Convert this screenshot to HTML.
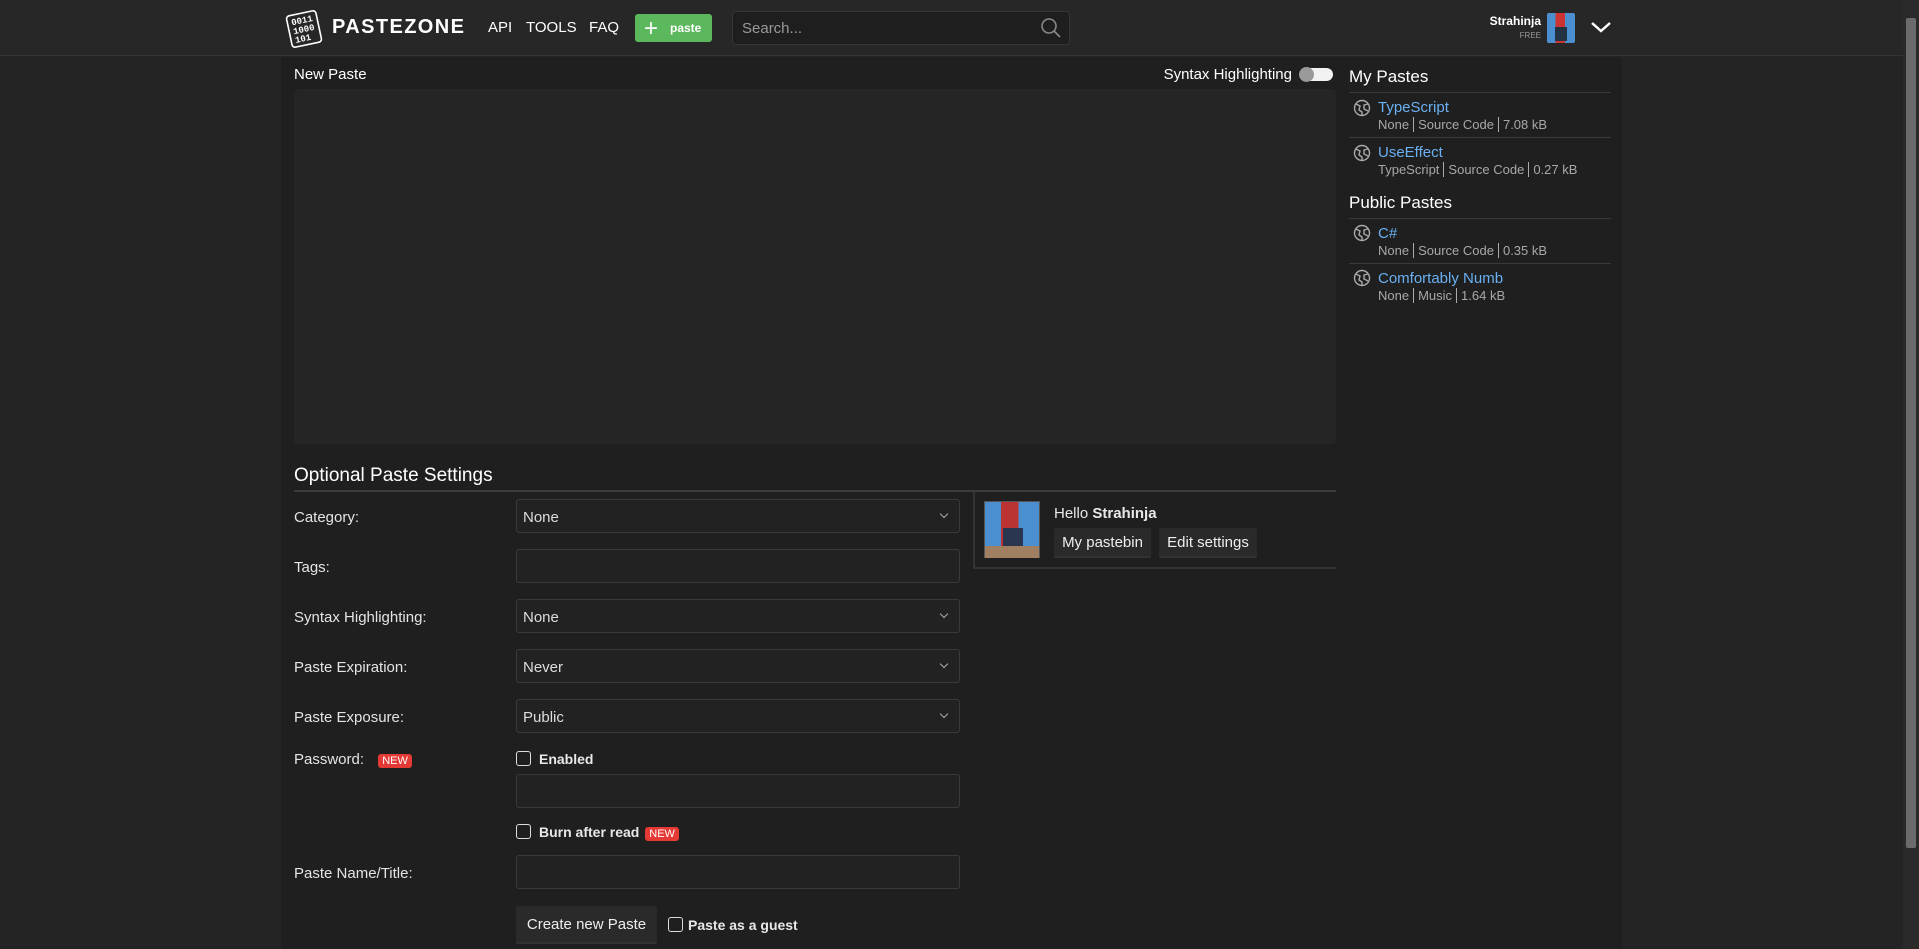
<!DOCTYPE html>
<html><head><meta charset="utf-8"><style>
*{box-sizing:border-box;margin:0;padding:0}
body{width:1919px;height:949px;overflow:hidden;background:#242424;font-family:"Liberation Sans",sans-serif;color:#e8e8e8;position:relative}
.abs{position:absolute}
.hdr{left:0;top:0;width:1903px;height:56px;background:#272727;border-bottom:1px solid #353535}
.col{left:281px;top:57px;width:1341px;height:892px;background:#1f1f1f}
.sb{left:1903px;top:0;width:16px;height:949px;background:#2a2a2a}
.sbt{left:1906px;top:18px;width:10px;height:830px;background:#6b6b6b;border-radius:2px}
.nav{font-size:15px;color:#fff;top:19px}
.inp{left:516px;width:444px;height:34px;background:#222;border:1px solid #3a3a3a;border-radius:3px;font-size:15px;padding:9px 6px;color:#ddd}
.sel::after{content:"";position:absolute;right:12px;top:11px;width:5px;height:5px;border-right:1px solid #aaa;border-bottom:1px solid #aaa;transform:rotate(45deg)}
.lbl{left:294px;font-size:15px;color:#e4e4e4}
.cb{width:15px;height:15px;border:1.5px solid #ddd;border-radius:3px}
.new{background:#e53935;color:#fff;font-size:11px;padding:1px 4px;border-radius:3px}
.btn{background:#2a2a2a;color:#eee;font-size:15px;border-radius:2px;border-bottom:2px solid #333;text-align:center}
.h2{font-size:17px;color:#fff}
.t{font-size:15px;color:#6ab0f3;left:1378px}
.m{font-size:13px;color:#a8a8a8;left:1378px}
.m b{font-weight:normal;border-left:1px solid #aaa;margin:0 4px}
.line{left:1349px;width:262px;height:1px;background:#3a3a3a}
.ic{left:1353px}
</style></head><body>
<div class="abs hdr"></div>
<svg class="abs" style="left:284px;top:9px" width="42" height="40" viewBox="0 0 42 40"><g transform="rotate(-12 20 20)"><rect x="5" y="4" width="30" height="32" rx="3" fill="none" stroke="#fff" stroke-width="1.6"/><text x="9" y="14" fill="#fff" font-size="9" font-weight="bold" font-family="Liberation Mono">0011</text><text x="9" y="23" fill="#fff" font-size="9" font-weight="bold" font-family="Liberation Mono">1000</text><text x="9" y="32" fill="#fff" font-size="9" font-weight="bold" font-family="Liberation Mono">101</text></g></svg>
<div class="abs" style="left:332px;top:16px;font-size:20px;font-weight:bold;letter-spacing:1.4px;color:#fff">PASTEZONE</div>
<div class="abs nav" style="left:488px">API</div>
<div class="abs nav" style="left:526px">TOOLS</div>
<div class="abs nav" style="left:589px">FAQ</div>
<div class="abs" style="left:635px;top:14px;width:77px;height:28px;background:#5cb85c;border-radius:3px;color:#fff;font-size:12px;font-weight:bold;padding:7px 0 0 35px">paste<span style="position:absolute;left:9px;top:1px;font-size:24px;font-weight:normal">+</span></div>
<div class="abs" style="left:732px;top:11px;width:338px;height:34px;background:#1e1e1e;border:1px solid #353535;border-radius:4px;font-size:15px;color:#999;padding:8px 9px">Search...</div>
<svg class="abs" style="left:1040px;top:17px" width="22" height="22" viewBox="0 0 22 22"><circle cx="9" cy="9" r="7" fill="none" stroke="#888" stroke-width="1.6"/><line x1="14" y1="14" x2="20" y2="20" stroke="#888" stroke-width="1.6"/></svg>
<div class="abs" style="left:1480px;top:14px;width:61px;text-align:right;font-size:12px;font-weight:bold;color:#fff">Strahinja</div>
<div class="abs" style="left:1480px;top:31px;width:61px;text-align:right;font-size:8px;color:#999">FREE</div>
<div class="abs" style="left:1547px;top:13px;width:28px;height:30px;background:linear-gradient(90deg,#4a8fd0 0 30%,#c33 30% 65%,#4a8fd0 65%);border-radius:2px"><div style="position:absolute;left:8px;top:14px;width:12px;height:14px;background:#234"></div></div>
<svg class="abs" style="left:1589px;top:19px" width="24" height="16" viewBox="0 0 24 16"><path d="M3 4 L12 12 L21 4" fill="none" stroke="#fff" stroke-width="2.5"/></svg>
<div class="abs col"></div>
<div class="abs sb"></div><div class="abs sbt"></div>
<div class="abs" style="left:294px;top:66px;font-size:15px;color:#fff">New Paste</div>
<div class="abs" style="left:1100px;top:66px;width:192px;text-align:right;font-size:15px;color:#fff">Syntax Highlighting</div>
<div class="abs" style="left:1300px;top:68px;width:33px;height:13px;background:#f2f2f2;border-radius:7px"><div style="position:absolute;left:-1px;top:-1px;width:15px;height:15px;border-radius:50%;background:#9a9a9a"></div></div>
<div class="abs" style="left:294px;top:89px;width:1042px;height:355px;background:#252525;border-radius:4px"></div>
<div class="abs" style="left:294px;top:465px;font-size:19px;color:#fff">Optional Paste Settings</div>
<div class="abs" style="left:294px;top:490px;width:1042px;height:2px;background:#3a3a3a"></div>
<div class="abs lbl" style="top:509px">Category:</div>
<div class="abs inp sel" style="top:499px">None</div>
<div class="abs lbl" style="top:559px">Tags:</div>
<div class="abs inp" style="top:549px"></div>
<div class="abs lbl" style="top:609px">Syntax Highlighting:</div>
<div class="abs inp sel" style="top:599px">None</div>
<div class="abs lbl" style="top:659px">Paste Expiration:</div>
<div class="abs inp sel" style="top:649px">Never</div>
<div class="abs lbl" style="top:709px">Paste Exposure:</div>
<div class="abs inp sel" style="top:699px">Public</div>
<div class="abs lbl" style="top:751px">Password: <span class="new" style="margin-left:10px">NEW</span></div>
<div class="abs cb" style="left:516px;top:751px"></div>
<div class="abs" style="left:539px;top:751px;font-size:14px;font-weight:bold">Enabled</div>
<div class="abs inp" style="top:774px"></div>
<div class="abs cb" style="left:516px;top:824px"></div>
<div class="abs" style="left:539px;top:824px;font-size:14px;font-weight:bold">Burn after read <span class="new" style="font-weight:normal;margin-left:2px">NEW</span></div>
<div class="abs lbl" style="top:865px">Paste Name/Title:</div>
<div class="abs inp" style="top:855px"></div>
<div class="abs btn" style="left:516px;top:906px;width:141px;height:38px;padding-top:10px">Create new Paste</div>
<div class="abs cb" style="left:668px;top:917px"></div>
<div class="abs" style="left:688px;top:917px;font-size:14px;font-weight:bold">Paste as a guest</div>
<div class="abs" style="left:973px;top:492px;width:363px;height:77px;border-left:2px solid #333;border-bottom:2px solid #333"></div>
<div class="abs" style="left:984px;top:501px;width:56px;height:57px;background:linear-gradient(90deg,#4a8fd0 0 30%,#b33 30% 62%,#4a8fd0 62%);border:1px solid #555"><div style="position:absolute;left:18px;top:26px;width:20px;height:22px;background:#2a3550"></div><div style="position:absolute;left:0;top:44px;width:54px;height:12px;background:#a08060"></div></div>
<div class="abs" style="left:1054px;top:505px;font-size:15px">Hello <b>Strahinja</b></div>
<div class="abs btn" style="left:1054px;top:528px;width:97px;height:30px;padding-top:6px">My pastebin</div>
<div class="abs btn" style="left:1159px;top:528px;width:98px;height:30px;padding-top:6px">Edit settings</div>
<div class="abs h2" style="left:1349px;top:67px">My Pastes</div>
<div class="abs line" style="top:92px"></div>
<svg class="abs ic" style="top:99px" width="18" height="18" viewBox="0 0 18 18"><g fill="none" stroke="#aaa" stroke-width="1.4"><circle cx="9" cy="9" r="7.5"/><path d="M3 5 L7 7 L6 11 L9 13 L9 16.5 M15 5 L11 6 L11 10 L15 12"/></g></svg>
<div class="abs t" style="top:99px">TypeScript</div><div class="abs m" style="top:117px">None<b></b>Source Code<b></b>7.08 kB</div>
<div class="abs line" style="top:137px"></div>
<svg class="abs ic" style="top:144px" width="18" height="18" viewBox="0 0 18 18"><g fill="none" stroke="#aaa" stroke-width="1.4"><circle cx="9" cy="9" r="7.5"/><path d="M3 5 L7 7 L6 11 L9 13 L9 16.5 M15 5 L11 6 L11 10 L15 12"/></g></svg>
<div class="abs t" style="top:144px">UseEffect</div><div class="abs m" style="top:162px">TypeScript<b></b>Source Code<b></b>0.27 kB</div>
<div class="abs h2" style="left:1349px;top:193px">Public Pastes</div>
<div class="abs line" style="top:218px"></div>
<svg class="abs ic" style="top:224px" width="18" height="18" viewBox="0 0 18 18"><g fill="none" stroke="#aaa" stroke-width="1.4"><circle cx="9" cy="9" r="7.5"/><path d="M3 5 L7 7 L6 11 L9 13 L9 16.5 M15 5 L11 6 L11 10 L15 12"/></g></svg>
<div class="abs t" style="top:225px">C#</div><div class="abs m" style="top:243px">None<b></b>Source Code<b></b>0.35 kB</div>
<div class="abs line" style="top:263px"></div>
<svg class="abs ic" style="top:269px" width="18" height="18" viewBox="0 0 18 18"><g fill="none" stroke="#aaa" stroke-width="1.4"><circle cx="9" cy="9" r="7.5"/><path d="M3 5 L7 7 L6 11 L9 13 L9 16.5 M15 5 L11 6 L11 10 L15 12"/></g></svg>
<div class="abs t" style="top:270px">Comfortably Numb</div><div class="abs m" style="top:288px">None<b></b>Music<b></b>1.64 kB</div>
</body></html>
